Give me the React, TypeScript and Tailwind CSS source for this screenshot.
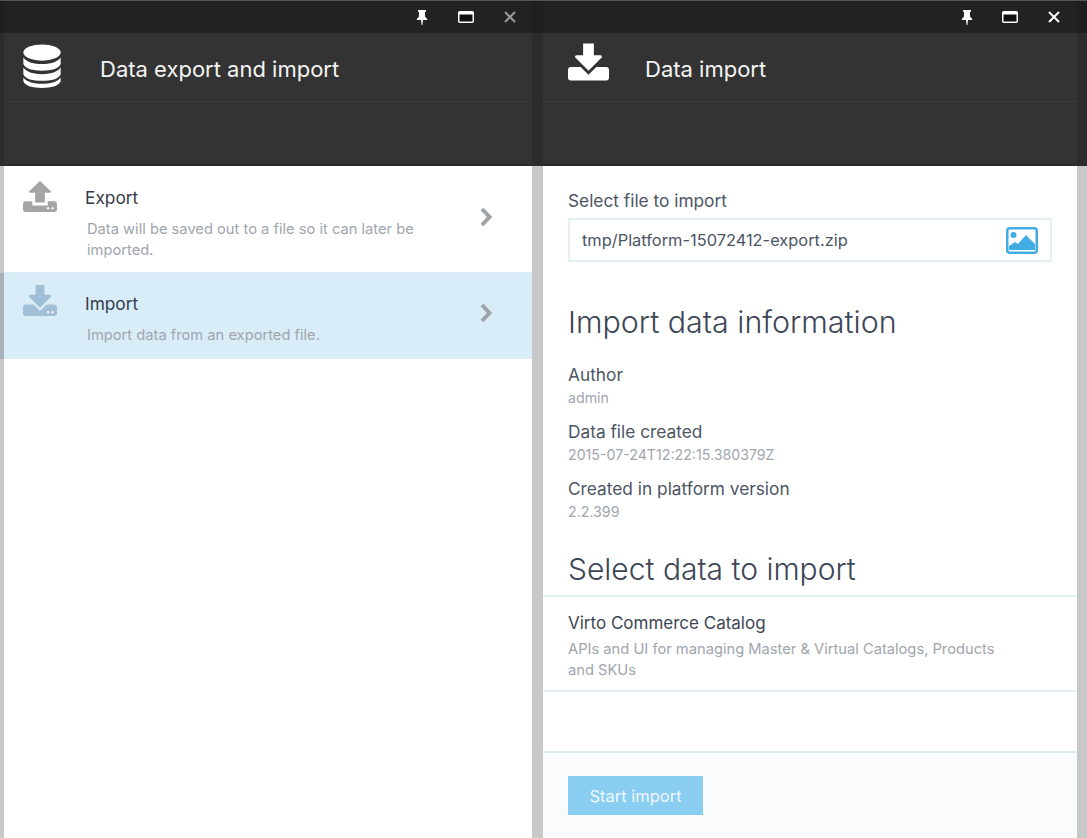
import React from "react";

const font = { fontFamily: "Inter, sans-serif" };

function Pin({ className = "" }: { className?: string }) {
  return (
    <svg viewBox="0 0 12 15" className={className} fill="currentColor">
      <path d="M2 0h8v1.500L9 2v4.500l2.200 2.400V10H7l-.6 5h-.8L5 10H.8V8.900L3 6.500V2l-1-.5z" />
    </svg>
  );
}

function Maximize() {
  return (
    <svg viewBox="0 0 16 12" className="h-3 w-4">
      <rect x="0.75" y="0.75" width="14.5" height="10.5" rx="1" fill="#111" stroke="#fff" strokeWidth="1.5" />
      <rect x="0.75" y="1" width="14.5" height="2.5" fill="#fff" />
    </svg>
  );
}

function Close({ className = "" }: { className?: string }) {
  return (
    <svg viewBox="0 0 12 12" className={className} fill="none" stroke="currentColor" strokeWidth="2">
      <path d="M1 1l10 10M11 1L1 11" />
    </svg>
  );
}

function TopBar({ closeClass, barClass, pinClass }: { closeClass: string; barClass: string; pinClass: string }) {
  return (
    <div className={`flex h-[33px] items-center justify-end border-t border-t-[#555] bg-[#222] text-white ${barClass}`}>
      <div className={`w-3 ${pinClass}`}><Pin className="h-[15px] w-3" /></div>
      <div className="mr-[30px]"><Maximize /></div>
      <Close className={`h-3 w-3 ${closeClass}`} />
    </div>
  );
}

function Drive({ up, className = "" }: { up: boolean; className?: string }) {
  return (
    <svg viewBox="0 0 42 38" className={className}>
      <path
        fill="currentColor"
        d={
          up
            ? "M21 0L35 13L34 14.500H27V26.500H15V14.500H8L7 13Z"
            : "M15.500 0H26.500V12H34L35 14L21 28L7 14L8 12H15.500Z"
        }
      />
      <path
        fill="currentColor"
        d={
          up
            ? "M3 25H11.500V30H30.500V25H39A3 3 0 0 1 42 28V35A3 3 0 0 1 39 38H3A3 3 0 0 1 0 35V28A3 3 0 0 1 3 25Z"
            : "M3 24H13L21 32L29 24H39A3 3 0 0 1 42 27V35A3 3 0 0 1 39 38H3A3 3 0 0 1 0 35V27A3 3 0 0 1 3 24Z"
        }
      />
      <circle cx="31" cy="33.500" r="1.500" fill="#fff" fillOpacity="0.85" />
      <circle cx="36.500" cy="33.500" r="1.500" fill="#fff" fillOpacity="0.85" />
    </svg>
  );
}

function Database() {
  return (
    <svg viewBox="0 0 40 46" className="h-[44px] w-[40px] text-white" fill="currentColor">
      <ellipse cx="20" cy="9" rx="19.500" ry="8.500" />
      <path d="M.5 14C4 19 12 21 20 21s16-2 19.500-7v7c-2 5-10 7-19.500 7S2.500 26 .5 21z" />
      <path d="M.5 24.500C4 29.500 12 31.500 20 31.500s16-2 19.500-7v7c-2 5-10 7-19.500 7S2.500 36.500 .5 31.500z" />
      <path d="M.5 35C4 40 12 41.500 20 41.500s16-1.500 19.500-6.500v4c-2 5-10 7-19.500 7S2.500 44 .5 39z" />
    </svg>
  );
}

function Header({ icon, title, closeClass, barClass, pinClass }: { icon: React.ReactNode; title: string; closeClass: string; barClass: string; pinClass: string }) {
  return (
    <div className="bg-[#333]">
      <TopBar closeClass={closeClass} barClass={barClass} pinClass={pinClass} />
      <div className="flex h-[69px] items-center border-b border-b-[#3d3d3d]">
        {icon}
        <h1 className="mt-[4px] text-[22px] leading-none text-[#f4f4f4]">{title}</h1>
      </div>
      <div className="h-[64px] border-b-2 border-b-[#2a2a2a]" />
    </div>
  );
}

function ListItem({ up, title, children, active }: { up: boolean; title: string; children: React.ReactNode; active?: boolean }) {
  return (
    <div className={`flex border-b border-b-[#e1edf4] pl-[19px] ${active ? "h-[86px] bg-[#d9edf8] pt-[11px] shadow-[-4px_0_0_#a6b2b9]" : "h-[107px] bg-white pt-[14px]"}`}>
      <Drive up={up} className={`h-[33px] w-[34px] shrink-0 ${active ? "text-[#a1c0d8]" : "text-[#a5a5a5]"}`} />
      <div className="ml-[28px] w-[380px]">
        <div className={`text-[17.300px] leading-[24px] text-[#333c48] ${active ? "mt-[8px]" : "mt-[6px]"}`}>{title}</div>
        <div className="mt-[9px] pl-[2px] text-[14.700px] leading-[21px] text-[#a0a5ae]">{children}</div>
      </div>
      <svg viewBox="0 0 14 20" className={`ml-[14px] h-[20px] w-[15px] text-[#a0a3a8] ${active ? "mt-[19px]" : "mt-[27px]"}`} fill="none" stroke="currentColor" strokeWidth="4">
        <path d="M2.500 2l7.500 8-7.500 8" />
      </svg>
    </div>
  );
}

function Field({ label, value }: { label: string; value: string }) {
  return (
    <div className="mb-[12px]">
      <div className="text-[17.300px] leading-[24px] text-[#4b5563]">{label}</div>
      <div className="mt-[1px] text-[14.200px] leading-[20px] text-[#a0a5ae]">{value}</div>
    </div>
  );
}

export default function App() {
  return (
    <div
      className="flex h-[838px] w-[1087px] overflow-hidden bg-[linear-gradient(#555_0,#555_1px,#1e1e1e_1px,#1e1e1e_33px,#2c2c2c_33px,#2c2c2c_166px,#c8c8c8_166px)]"
      style={font}
    >
      <section className="ml-[4px] flex w-[528px] flex-col bg-white">
        <Header
          icon={<div className="ml-[18px] mr-[38px] -mt-[2px]"><Database /></div>}
          title="Data export and import"
          closeClass="text-[#9a9a9a]"
          barClass="pr-[16px]"
          pinClass="mr-[30px]"
        />
        <ListItem up title="Export">
          Data will be saved out to a file so it can later be imported.
        </ListItem>
        <ListItem up={false} title="Import" active>
          Import data from an exported file.
        </ListItem>
      </section>

      <section className="ml-[11px] flex w-[534px] flex-col bg-white">
        <Header
          icon={<Drive up={false} className="ml-[25px] mr-[36px] -mt-[10px] h-[38px] w-[41px] text-white" />}
          title="Data import"
          closeClass="text-white"
          barClass="pr-[17px]"
          pinClass="mr-[29px]"
        />
        <div className="flex flex-1 flex-col">
          <div className="px-[25px] pt-[23px]">
            <div className="text-[17.300px] leading-[24px] text-[#4b5563]">Select file to import</div>
            <div className="mt-[5px] flex h-[44px] items-center justify-between border-2 border-[#e4eff6] pl-[12px] pr-[12px] text-[16.400px] text-[#4b5563]">
              <span>tmp/Platform-15072412-export.zip</span>
              <svg viewBox="0 0 32 27" className="h-[27px] w-[32px]">
                <rect x="1.250" y="1.250" width="29.500" height="24.500" rx="2.500" fill="none" stroke="#41ade2" strokeWidth="2.500" />
                <circle cx="7.500" cy="8" r="3" fill="#41ade2" />
                <path d="M3 23v-4l6-4 3 2 8-9 9 9v6z" fill="#41ade2" />
              </svg>
            </div>
            <h2 className="mt-[42px] text-[30.400px] leading-[36px] font-light text-[#3c4655]">Import data information</h2>
            <div className="mt-[23px]">
              <Field label="Author" value="admin" />
              <Field label="Data file created" value="2015-07-24T12:22:15.380379Z" />
              <Field label="Created in platform version" value="2.2.399" />
            </div>
            <h2 className="mt-[29px] text-[30px] leading-[36px] font-light text-[#3c4655]">Select data to import</h2>
          </div>
          <div className="mt-[8px] h-[97px] border-y-2 border-[#e4eff6] px-[25px] pt-[14px]">
            <div className="text-[17px] leading-[24px] text-[#3c4655]">Virto Commerce Catalog</div>
            <div className="mt-[4px] w-[440px] text-[14.700px] leading-[21px] text-[#a0a5ae]">APIs and UI for managing Master &amp; Virtual Catalogs, Products and SKUs</div>
          </div>
          <div className="flex-1" />
          <div className="h-[87px] border-t-2 border-[#dceaf3] bg-[#f9fbfd] px-[25px] pt-[23px]">
            <button className="flex h-[39px] w-[135px] items-center justify-center bg-[#89cdf0] pt-[1px] text-[16.500px] text-[#eef8fd]">Start import</button>
          </div>
        </div>
      </section>
    </div>
  );
}
